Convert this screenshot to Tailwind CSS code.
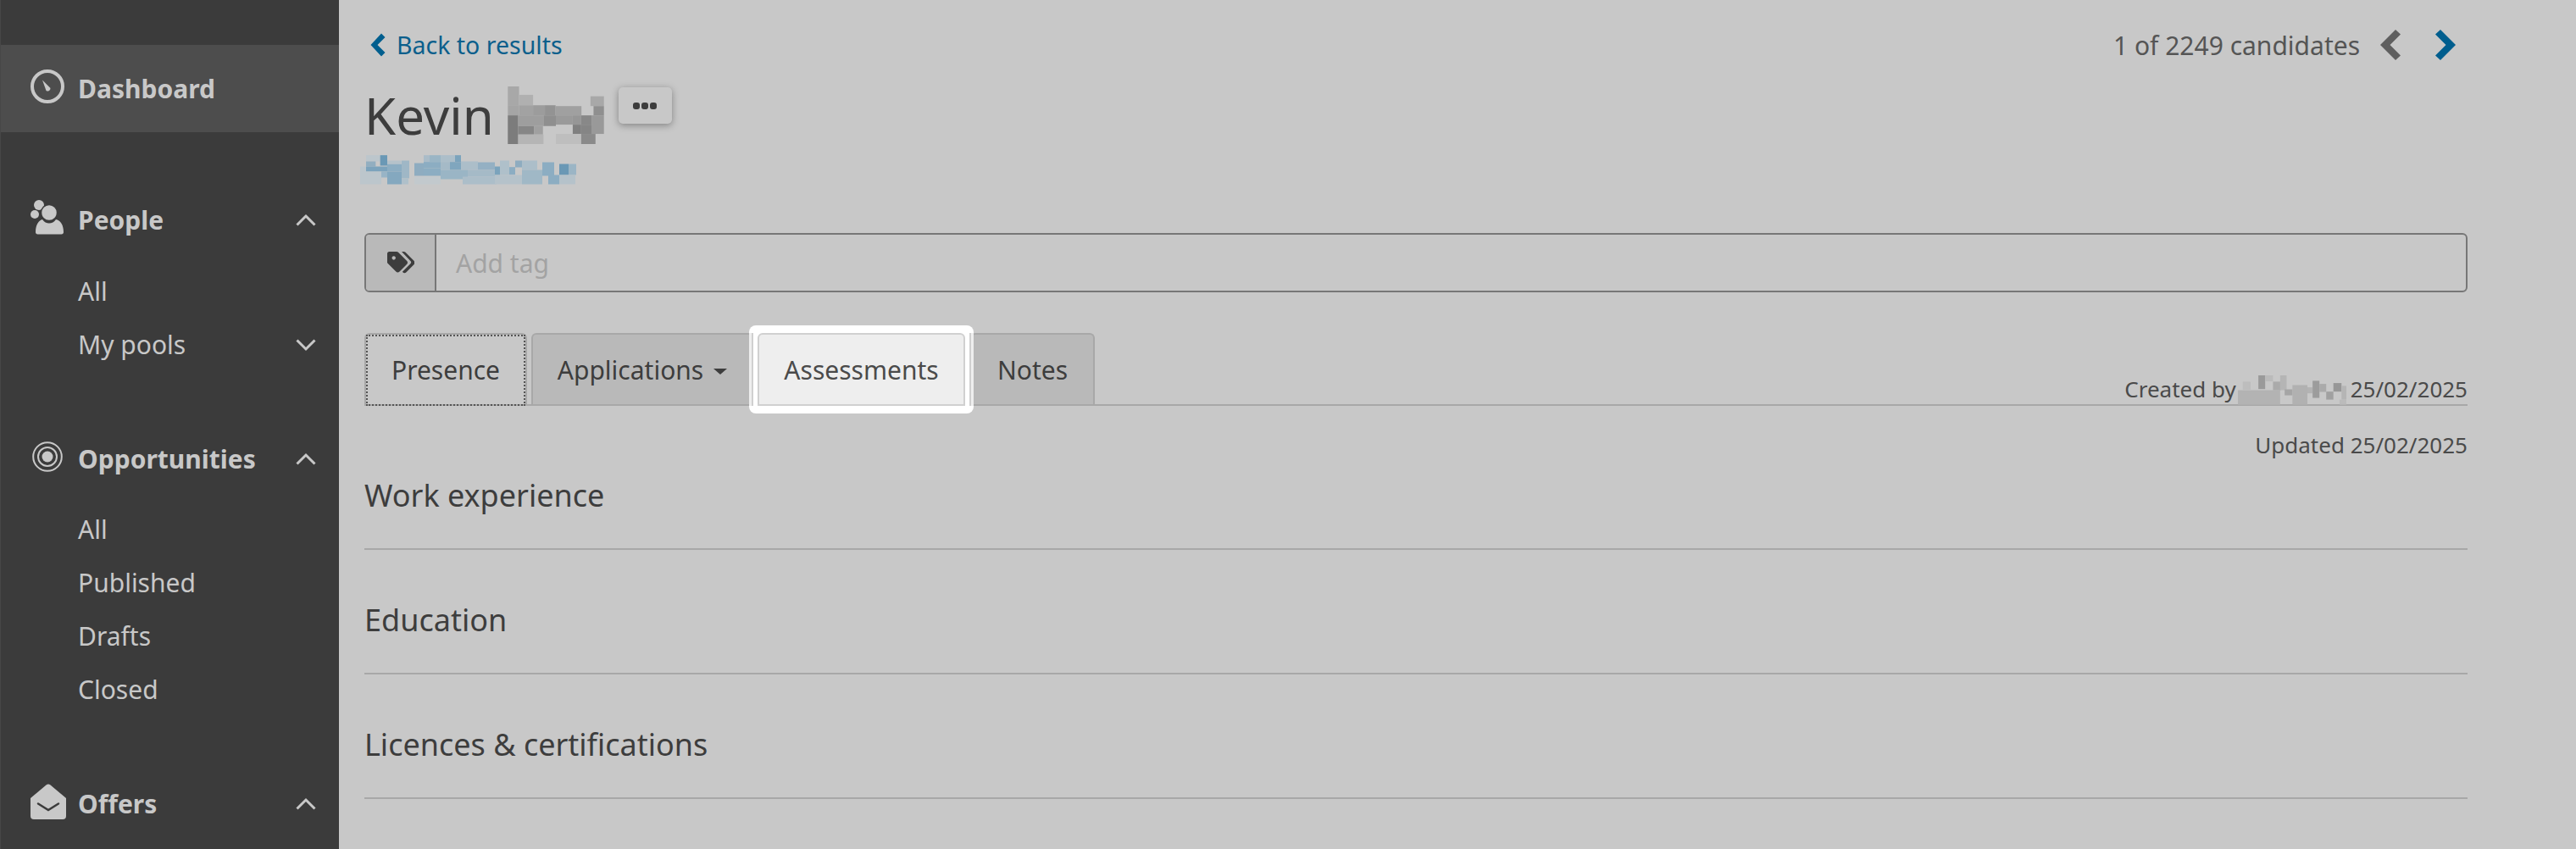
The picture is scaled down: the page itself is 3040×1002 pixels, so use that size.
<!DOCTYPE html>
<html lang="en">
<head>
    <meta charset="UTF-8">
    <title>Candidate - Kevin</title>
    <script src="https://cdn.jsdelivr.net/npm/@tailwindcss/browser@4"></script>
</head>
<body class="h-screen overflow-hidden flex bg-[#c8c8c8] text-[30px] text-[#3d3d3d] font-['Noto_Sans',sans-serif]">
    <!-- sidebar -->
    <aside class="w-[400px] shrink-0 h-full overflow-hidden bg-[#3b3b3b] border-l border-[#474747] text-[#c8c8c8] pt-[53px]">
        <a class="h-[103px] flex items-center bg-[#4d4d4d] pl-[35px] font-bold">
            <svg class="w-[40px] h-[40px] -mt-[6px]" viewBox="0 0 40 40" fill="none">
                <circle cx="20" cy="20" r="18" stroke="#c8c8c8" stroke-width="4"/>
                <path d="M14 12.500l9.500 9.500a3.200 3.200 0 0 1-5 3z" fill="#c8c8c8"/>
            </svg>
            <span class="ml-[16px]">Dashboard</span>
        </a>

        <div class="mt-[72px] h-[63px] flex items-center pl-[35px] pr-[27px] font-bold">
            <svg class="w-[40px] h-[42px] -mt-[6px]" viewBox="0 0 40 42" fill="#c8c8c8">
                <circle cx="10" cy="6" r="6"/>
                <circle cx="5" cy="17" r="5"/>
                <circle cx="22" cy="15" r="9.500" stroke="#3b3b3b" stroke-width="1.500"/>
                <path d="M6 38c0-9 4-14 8-15 2 3 5 4.500 8 4.500s6-1.500 8-4.500c5 1 9 6 9 15 0 1.500-1 2.500-2.500 2.500H8.500C7 40.500 6 39.500 6 38z"/>
            </svg>
            <span class="ml-[16px] flex-1">People</span>
            <svg class="w-[24px] h-[16px]" viewBox="0 0 24 16" fill="none" stroke="#c8c8c8" stroke-width="3"><path d="M1.500 13.500L12 3l10.500 10.500"/></svg>
        </div>
        <div class="mt-[21px] h-[63px] flex items-center pl-[91px]">All</div>
        <div class="h-[63px] flex items-center pl-[91px] pr-[27px]">
            <span class="flex-1">My pools</span>
            <svg class="w-[24px] h-[16px]" viewBox="0 0 24 16" fill="none" stroke="#c8c8c8" stroke-width="3"><path d="M1.500 2.500L12 13 22.500 2.500"/></svg>
        </div>

        <div class="mt-[72px] h-[63px] flex items-center pl-[37px] pr-[27px] font-bold">
            <svg class="w-[36px] h-[36px] -mt-[6px]" viewBox="0 0 36 36" fill="none" stroke="#c8c8c8">
                <circle cx="18" cy="18" r="16.800" stroke-width="2"/>
                <circle cx="18" cy="18" r="11" stroke-width="2"/>
                <circle cx="18" cy="18" r="6.500" fill="#c8c8c8" stroke="none"/>
            </svg>
            <span class="ml-[18px] flex-1">Opportunities</span>
            <svg class="w-[24px] h-[16px]" viewBox="0 0 24 16" fill="none" stroke="#c8c8c8" stroke-width="3"><path d="M1.500 13.500L12 3l10.500 10.500"/></svg>
        </div>
        <div class="mt-[20px] h-[63px] flex items-center pl-[91px]">All</div>
        <div class="h-[63px] flex items-center pl-[91px]">Published</div>
        <div class="h-[63px] flex items-center pl-[91px]">Drafts</div>
        <div class="h-[63px] flex items-center pl-[91px]">Closed</div>

        <div class="mt-[72px] h-[63px] flex items-center pl-[35px] pr-[27px] font-bold">
            <svg class="w-[42px] h-[42px] -mt-[6px]" viewBox="0 0 42 42">
                <path d="M0 17L18.500 1.500a4 4 0 0 1 5 0L42 17v21a4 4 0 0 1-4 4H4a4 4 0 0 1-4-4z" fill="#c8c8c8"/>
                <path d="M9 23.500l12 7.500 12-7.500" fill="none" stroke="#3b3b3b" stroke-width="2.500" stroke-linecap="round"/>
            </svg>
            <span class="ml-[14px] flex-1">Offers</span>
            <svg class="w-[24px] h-[16px]" viewBox="0 0 24 16" fill="none" stroke="#c8c8c8" stroke-width="3"><path d="M1.500 13.500L12 3l10.500 10.500"/></svg>
        </div>
    </aside>

    <!-- main -->
    <main class="flex-1 min-w-0 pl-[30px] pr-[128px]">
        <div class="h-[106px] flex items-center justify-between">
            <a class="flex items-center text-[28.5px] text-[#0b5f8c] pl-[7px]">
                <svg class="w-[18px] h-[28px]" viewBox="0 0 18 28" fill="#005e8e"><path d="M13 .5l4.500 4.500-9 9 9 9-4.500 4.500L.5 14z"/></svg>
                <span class="ml-[13px]">Back to results</span>
            </a>
            <div class="flex items-center text-[#555] pr-[14px]">
                <span>1 of 2249 candidates</span>
                <svg class="ml-[24px] w-[24px] h-[36px]" viewBox="0 0 24 36" fill="#5f5f5f"><path d="M18 0l6 5.500L11.500 18 24 30.500 18 36 0 18z"/></svg>
                <svg class="ml-[41px] w-[24px] h-[36px]" viewBox="0 0 24 36" fill="#005e8e"><path d="M6 0L0 5.500 12.500 18 0 30.500 6 36l18-18z"/></svg>
            </div>
        </div>

        <div class="-mt-[4px] flex items-start h-[72px]">
            <h1 class="text-[60px] leading-[68px] flex items-center">
                Kevin
                <svg class="ml-[16px] w-[115px] h-[68px]" viewBox="570 305 345 205">
                    <rect x="570" y="305" width="40" height="67" fill="#a8a8a8"/>
                    <rect x="610" y="335" width="50" height="37" fill="#b0b0b0"/>
                    <rect x="864" y="340" width="48" height="35" fill="#a8a8a8"/>
                    <rect x="570" y="372" width="40" height="36" fill="#a5a5a5"/>
                    <rect x="610" y="372" width="50" height="36" fill="#a2a2a2"/>
                    <rect x="660" y="372" width="42" height="36" fill="#9c9c9c"/>
                    <rect x="702" y="372" width="38" height="36" fill="#939393"/>
                    <rect x="740" y="375" width="92" height="33" fill="#a0a0a0"/>
                    <rect x="875" y="375" width="37" height="33" fill="#8f8f8f"/>
                    <rect x="570" y="408" width="37" height="102" fill="#7c7c7c"/>
                    <rect x="607" y="408" width="90" height="38" fill="#9e9e9e"/>
                    <rect x="697" y="408" width="44" height="38" fill="#8f8f8f"/>
                    <rect x="741" y="408" width="60" height="33" fill="#9a9a9a"/>
                    <rect x="801" y="408" width="30" height="33" fill="#969696"/>
                    <rect x="831" y="408" width="37" height="33" fill="#888888"/>
                    <rect x="868" y="408" width="44" height="66" fill="#999999"/>
                    <rect x="607" y="446" width="56" height="30" fill="#868686"/>
                    <rect x="663" y="446" width="32" height="30" fill="#a0a0a0"/>
                    <rect x="801" y="441" width="30" height="33" fill="#808080"/>
                    <rect x="831" y="441" width="37" height="33" fill="#858585"/>
                    <rect x="607" y="476" width="90" height="34" fill="#b5b5b5"/>
                    <rect x="741" y="474" width="90" height="36" fill="#bebebe"/>
                    <rect x="831" y="474" width="51" height="36" fill="#8a8a8a"/>
                </svg>
            </h1>
            <button class="ml-[16px] mt-[1px] w-[63px] h-[43px] rounded-[5px] bg-[#c8c8c8] shadow-[0_2px_8px_rgba(0,0,0,0.35)] flex items-center justify-center gap-[2px]">
                <span class="w-[8px] h-[8px] rounded-[3px] bg-[#3d3d3d]"></span>
                <span class="w-[8px] h-[8px] rounded-[3px] bg-[#3d3d3d]"></span>
                <span class="w-[8px] h-[8px] rounded-[3px] bg-[#3d3d3d]"></span>
            </button>
        </div>

        <!-- email, pixelated -->
        <svg class="block -ml-[5px] w-[256px] h-[35px] mt-[9px]" viewBox="45 548 768 104">
            <rect x="66" y="548" width="50" height="22" fill="#bcc6cc"/>
            <rect x="116" y="548" width="25" height="37" fill="#6a98b5"/>
            <rect x="66" y="570" width="34" height="18" fill="#92aec0"/>
            <rect x="141" y="567" width="50" height="18" fill="#b5c2ca"/>
            <rect x="192" y="567" width="27" height="63" fill="#9fb7c6"/>
            <rect x="45" y="588" width="21" height="63" fill="#bcc6cc"/>
            <rect x="66" y="588" width="75" height="18" fill="#7ca3bc"/>
            <rect x="141" y="580" width="51" height="26" fill="#8cadc2"/>
            <rect x="66" y="606" width="54" height="45" fill="#bcc6cc"/>
            <rect x="120" y="606" width="21" height="21" fill="#98b4c6"/>
            <rect x="141" y="606" width="51" height="45" fill="#84a8bf"/>
            <rect x="192" y="630" width="24" height="21" fill="#afc0ca"/>
            <rect x="237" y="576" width="33" height="45" fill="#8eacc0"/>
            <rect x="270" y="548" width="21" height="28" fill="#aabcc8"/>
            <rect x="291" y="548" width="39" height="24" fill="#9ab5c5"/>
            <rect x="330" y="548" width="51" height="24" fill="#acbec9"/>
            <rect x="381" y="548" width="21" height="24" fill="#7ba3bc"/>
            <rect x="270" y="572" width="60" height="22" fill="#8cadc2"/>
            <rect x="330" y="572" width="33" height="28" fill="#a5bac7"/>
            <rect x="363" y="572" width="39" height="28" fill="#80a6be"/>
            <rect x="402" y="570" width="60" height="30" fill="#acbec9"/>
            <rect x="462" y="573" width="60" height="27" fill="#94b0c3"/>
            <rect x="270" y="594" width="60" height="27" fill="#8cadc2"/>
            <rect x="330" y="600" width="96" height="33" fill="#9ab5c5"/>
            <rect x="426" y="600" width="96" height="24" fill="#a5bac7"/>
            <rect x="522" y="588" width="18" height="30" fill="#7ba3bc"/>
            <rect x="540" y="567" width="33" height="51" fill="#afc0ca"/>
            <rect x="573" y="590" width="21" height="27" fill="#8cadc2"/>
            <rect x="594" y="567" width="24" height="24" fill="#8eacc0"/>
            <rect x="618" y="567" width="54" height="33" fill="#acbec9"/>
            <rect x="618" y="600" width="72" height="51" fill="#a0b8c6"/>
            <rect x="690" y="573" width="42" height="48" fill="#8cadc2"/>
            <rect x="750" y="579" width="33" height="39" fill="#6a98b5"/>
            <rect x="783" y="579" width="27" height="39" fill="#9bb5c5"/>
            <rect x="711" y="618" width="39" height="33" fill="#8cadc2"/>
            <rect x="750" y="618" width="57" height="33" fill="#b5c2ca"/>
            <rect x="237" y="624" width="93" height="27" fill="#c2c9cd"/>
            <rect x="408" y="624" width="120" height="27" fill="#acbec9"/>
            <rect x="522" y="618" width="96" height="33" fill="#b5c2ca"/>
        </svg>

        <!-- add tag -->
        <div class="mt-[57px] h-[70px] flex border-2 border-[#777] rounded-[6px] overflow-hidden">
            <div class="w-[83px] flex items-center justify-center bg-[#b9b9b9] border-r-2 border-[#777]">
                <svg class="w-[32px] h-[26px]" viewBox="0 0 32 26" fill="#3d3d3d">
                    <path d="M0 2.500A2.500 2.500 0 0 1 2.500 0h8.500a3 3 0 0 1 2 .8l10 10a3 3 0 0 1 0 4.200l-8.500 8.500a3 3 0 0 1-4.200 0l-10-10A3 3 0 0 1 0 11.500zM5.500 7.500a2.200 2.200 0 1 0 0-.1z"/>
                    <path d="M17 0h2.500a3 3 0 0 1 2 .8l9.700 9.700a3.500 3.500 0 0 1 0 5L22.500 24.200a3 3 0 0 1-4.200 0l-.4-.4 9.500-9.500a2.500 2.500 0 0 0 0-3.400z"/>
                </svg>
            </div>
            <div class="flex-1 flex items-center pl-[23px] text-[#a3a3a3]">Add tag</div>
        </div>

        <!-- tabs -->
        <div class="mt-[48px] h-[86px] flex items-end justify-between border-b-2 border-[#a8a8a8]">
            <div class="flex gap-[5px] h-[84px]">
                <div class="relative w-[192px] h-[84px] flex items-center justify-center bg-[#c8c8c8] border-2 border-b-0 border-[#a8a8a8] rounded-t-[6px]">
                    Presence
                    <span class="absolute inset-x-0 top-0 -bottom-[2px] border-2 border-dotted border-[#555]"></span>
                </div>
                <div class="w-[262px] h-[84px] flex items-center justify-center bg-[#b9b9b9] border-2 border-b-0 border-[#a8a8a8] rounded-t-[6px]">
                    Applications
                    <span class="ml-[12px] mt-[4px] w-0 h-0 border-x-[8px] border-t-[7px] border-x-transparent border-t-[#3d3d3d]"></span>
                </div>
                <div class="relative w-[245px] h-[84px]">
                    <span class="absolute -left-[10px] -right-[10px] -top-[9px] -bottom-[11px] bg-white rounded-[8px]"></span>
                    <span class="absolute -left-[10px] top-0 w-[5px] h-[86px] bg-[#eeeeee] border-r-2 border-[#d0d0d0]"></span>
                    <span class="absolute -right-[10px] top-0 w-[5px] h-[86px] bg-[#eeeeee] border-l-2 border-[#d0d0d0]"></span>
                    <div class="relative h-[86px] flex items-center justify-center bg-[#eeeeee] border-2 border-[#d0d0d0] rounded-t-[6px] text-[#4a4a4a]">Assessments</div>
                </div>
                <div class="ml-[1px] w-[147px] h-[84px] flex items-center justify-center bg-[#b9b9b9] border-2 border-b-0 border-[#a8a8a8] rounded-t-[6px]">Notes</div>
            </div>
            <div class="flex items-center text-[26px] h-[40px] -mb-[2px] text-[#4a4a4a]">
                Created by
                <svg class="ml-[2px] mr-[5px] w-[128px] h-[35px] mt-[2px]" viewBox="528 548 334 104" preserveAspectRatio="none">
                    <rect x="528" y="600" width="130" height="51" fill="#b3b3b3"/>
                    <rect x="543" y="570" width="24" height="30" fill="#bdbdbd"/>
                    <rect x="591" y="548" width="21" height="48" fill="#9a9a9a"/>
                    <rect x="612" y="548" width="24" height="21" fill="#bbbbbb"/>
                    <rect x="636" y="570" width="24" height="30" fill="#aaaaaa"/>
                    <rect x="658" y="548" width="20" height="52" fill="#b5b5b5"/>
                    <rect x="672" y="597" width="24" height="21" fill="#a5a5a5"/>
                    <rect x="696" y="582" width="46" height="69" fill="#b1b1b1"/>
                    <rect x="742" y="590" width="16" height="21" fill="#b3b3b3"/>
                    <rect x="758" y="567" width="21" height="60" fill="#9c9c9c"/>
                    <rect x="779" y="578" width="21" height="28" fill="#aaaaaa"/>
                    <rect x="800" y="605" width="22" height="28" fill="#a0a0a0"/>
                    <rect x="822" y="575" width="25" height="30" fill="#979797"/>
                    <rect x="847" y="585" width="15" height="48" fill="#b5b5b5"/>
                    <rect x="841" y="633" width="21" height="18" fill="#bbbbbb"/>
                </svg>
                25/02/2025
            </div>
        </div>
        <div class="mt-[28px] text-right text-[26px] leading-[36px] text-[#4a4a4a]">Updated 25/02/2025</div>

        <!-- sections -->
        <div class="h-[106px] flex items-end pb-[39px] text-[36px] leading-[46px] border-b-2 border-[#a8a8a8]">Work experience</div>
        <div class="h-[147px] flex items-end pb-[39px] text-[36px] leading-[46px] border-b-2 border-[#a8a8a8]">Education</div>
        <div class="h-[147px] flex items-end pb-[39px] text-[36px] leading-[46px] border-b-2 border-[#a8a8a8]">Licences &amp; certifications</div>
    </main>
</body>
</html>
